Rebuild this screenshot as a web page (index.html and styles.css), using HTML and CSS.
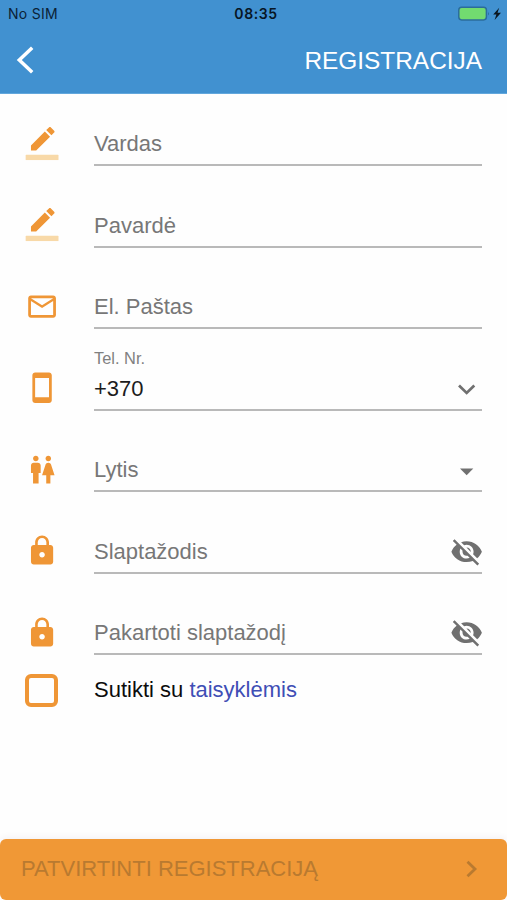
FILE: index.html
```html
<!DOCTYPE html>
<html lang="lt">
<head>
<meta charset="utf-8">
<meta name="viewport" content="width=device-width, initial-scale=1">
<title>Registracija</title>
<link rel="stylesheet" href="styles.css">
</head>
<body>
<svg width="0" height="0" class="defs">
  <symbol id="pencil" viewBox="0 0 24 24"><path d="M17.75 7L14 3.25l-10 10V17h3.75l10-10zm2.96-2.96c.39-.39.39-1.02 0-1.41L18.37.29c-.39-.39-1.02-.39-1.41 0L15 2.25 18.75 6l1.96-1.96z"/><rect y="20" width="24" height="4" rx=".6" fill="#f8d9a8"/></symbol>
  <symbol id="mail" viewBox="0 0 24 24"><path d="M20 4H4c-1.1 0-1.99.9-1.99 2L2 18c0 1.1.9 2 2 2h16c1.1 0 2-.9 2-2V6c0-1.1-.9-2-2-2zm0 14H4V8l8 5 8-5v10zm-8-7L4 6h16l-8 5z"/></symbol>
  <symbol id="phone" viewBox="0 0 24 24"><path d="M17 1.01L7 1c-1.1 0-1.99.9-1.99 2v18c0 1.1.89 2 1.99 2h10c1.1 0 2-.9 2-2V3c0-1.1-.9-1.99-2-1.99zM17 19H7V5h10v14z"/></symbol>
  <symbol id="wc" viewBox="0 0 24 24"><path d="M5.5 22v-7.5H4V9c0-1.1.9-2 2-2h3c1.1 0 2 .9 2 2v5.5H9.500V22h-4zM18 22v-6h3l-2.540-7.630C18.180 7.550 17.420 7 16.560 7h-.12c-.86 0-1.630.55-1.900 1.370L12 16h3v6h3zM7.500 6c1.110 0 2-.89 2-2s-.89-2-2-2-2 .89-2 2 .89 2 2 2zm9 0c1.110 0 2-.89 2-2s-.89-2-2-2-2 .89-2 2 .89 2 2 2z"/></symbol>
  <symbol id="lock" viewBox="0 0 24 24"><path d="M18 8h-1V6c0-2.760-2.240-5-5-5S7 3.240 7 6v2H6c-1.100 0-2 .9-2 2v10c0 1.100.9 2 2 2h12c1.100 0 2-.9 2-2V10c0-1.100-.9-2-2-2zm-6 9c-1.100 0-2-.9-2-2s.9-2 2-2 2 .9 2 2-.9 2-2 2zm3.100-9H8.900V6c0-1.710 1.390-3.100 3.100-3.100s3.100 1.390 3.100 3.100v2z"/></symbol>
  <symbol id="hidden" viewBox="0 0 24 24"><path d="M12 7c2.760 0 5 2.240 5 5 0 .65-.13 1.260-.36 1.830l2.920 2.920c1.510-1.260 2.700-2.890 3.430-4.750-1.730-4.390-6-7.500-11-7.500-1.400 0-2.740.25-3.980.7l2.160 2.160C10.740 7.130 11.350 7 12 7zM2 4.270l2.280 2.280.46.46C3.080 8.300 1.780 10.020 1 12c1.730 4.390 6 7.500 11 7.500 1.550 0 3.030-.3 4.380-.84l.42.42L19.730 22 21 20.730 3.270 3 2 4.270zM7.530 9.800l1.550 1.550c-.05.21-.08.43-.08.65 0 1.660 1.340 3 3 3 .22 0 .44-.03.65-.08l1.550 1.550c-.67.33-1.410.53-2.200.53-2.760 0-5-2.240-5-5 0-.79.2-1.530.53-2.200zm4.310-.78l3.150 3.150.02-.16c0-1.660-1.340-3-3-3l-.17.01z"/></symbol>
</svg>
<div class="screen">
  <header class="header">
    <div class="status">
      <span class="carrier">No SIM</span>
      <span class="clock">08:35</span>
      <svg class="battery" viewBox="0 0 44 16">
        <rect x=".8" y="1.300" width="27.600" height="12.600" rx="2.800" fill="#72db70" stroke="#2b6c9b" stroke-width="1.500"/>
        <path d="M30 5.500q1.700 2 0 4z" fill="#2b6c9b"/>
        <path d="M41.200 1.800L35.200 8.600h3.200l-1.800 5.300 6.400-7.200h-3.500z" fill="#0b1620"/>
      </svg>
    </div>
    <div class="titlebar">
      <svg class="back" viewBox="0 0 20 30"><path d="M16.200 2.800L3.300 15l12.900 12.200" fill="none" stroke="#fff" stroke-width="3.500"/></svg>
      <h1 class="title">REGISTRACIJA</h1>
    </div>
  </header>
  <main class="form">
    <div class="row"><svg class="icon" viewBox="-.3 0 24 24"><use href="#pencil" width="24" height="24"/></svg><div class="field"><span class="label">Vardas</span></div></div>
    <div class="row"><svg class="icon" viewBox="-.3 0 24 24"><use href="#pencil" width="24" height="24"/></svg><div class="field"><span class="label">Pavardė</span></div></div>
    <div class="row"><svg class="icon" viewBox="-.3 0 24 24"><use href="#mail" width="24" height="24"/></svg><div class="field"><span class="label">El. Paštas</span></div></div>
    <div class="row"><svg class="icon" viewBox="-.3 0 24 24"><use href="#phone" width="24" height="24"/></svg><div class="field"><span class="caption">Tel. Nr.</span><span class="label value">+370</span><svg class="tail" viewBox="0 0 34 34"><path d="M9.200 13.800l7.800 7.600 7.800-7.600" fill="none" stroke="#707070" stroke-width="2.800"/></svg></div></div>
    <div class="row"><svg class="icon" viewBox="-.3 0 24 24"><use href="#wc" width="24" height="24"/></svg><div class="field"><span class="label">Lytis</span><svg class="tail" viewBox="0 0 34 34"><path d="M10.200 15.700h13.600L17 22.600z"/></svg></div></div>
    <div class="row"><svg class="icon" viewBox="-.3 0 24 24"><use href="#lock" width="24" height="24"/></svg><div class="field"><span class="label">Slaptažodis</span><svg class="tail"><use href="#hidden"/></svg></div></div>
    <div class="row"><svg class="icon" viewBox="-.3 0 24 24"><use href="#lock" width="24" height="24"/></svg><div class="field"><span class="label">Pakartoti slaptažodį</span><svg class="tail"><use href="#hidden"/></svg></div></div>
    <div class="agree"><span class="checkbox"></span><span class="terms">Sutikti su <a class="link">taisyklėmis</a></span></div>
  </main>
  <div class="submit"><span class="submit-text">PATVIRTINTI REGISTRACIJĄ</span><svg class="next" viewBox="0 0 12 18"><path d="M1.500 1.800L9 9l-7.500 7.200" fill="none" stroke="#b97a30" stroke-width="2.800"/></svg></div>
</div>
</body>
</html>
```
FILE: styles.css
```css
* { box-sizing: border-box; }
body {
  margin: 0;
  background: #fefefe;
  font-family: "Liberation Sans", Arial, sans-serif;
  font-size: 22px;
  color: #111;
}
.defs { position: absolute; }
.screen {
  height: 900px;
  display: flex;
  flex-direction: column;
  overflow: hidden;
}
.header {
  height: 94px;
  flex: none;
  background: #4191d0;
  border-bottom: 1px solid #62a7dc;
}
.status {
  display: grid;
  grid-template-columns: 1fr auto 1fr;
  align-items: center;
  height: 27px;
  padding: 0 5px 0 8px;
  font-family: Inter, sans-serif;
  font-size: 14px;
  line-height: 27px;
  color: #0b2236;
}
.carrier { letter-spacing: .3px; }
.clock { padding-left: 2px; font-weight: 600; color: #071625; letter-spacing: .6px; }
.battery { width: 44px; height: 16px; justify-self: end; }
.titlebar {
  display: flex;
  align-items: center;
  justify-content: space-between;
  height: 66px;
  padding: 0 25px 0 15.500px;
}
.back { width: 20px; height: 30px; margin-top: -1px; }
.title { margin: 0; padding-top: 2px; font-size: 24.4px; font-weight: 400; color: #fff; line-height: 66px; }
.form {
  flex: 1;
  display: flex;
  flex-direction: column;
  gap: 36.500px;
  padding: 27px 24.600px 0 25px;
}
.row { display: flex; align-items: center; height: 45px; flex: none; }
.icon {
  width: 33.300px;
  height: 33.300px;
  fill: #ef9636;
  flex: none;
  margin-right: 35.700px;
  overflow: visible;
}
.field {
  position: relative;
  flex: 1;
  display: flex;
  align-items: center;
  justify-content: space-between;
  height: 45px;
  border-bottom: 2px solid #b9b9b9;
}
.label { padding-top: 3px; color: #777; line-height: 42px; }
.value { color: #1c1c1c; }
.caption {
  position: absolute;
  left: 0;
  top: -18px;
  font-size: 16.400px;
  line-height: 20px;
  color: #808080;
}
.tail { width: 33.300px; height: 33.300px; margin: 3px -.7px 0 0; fill: #707070; }
.agree { display: flex; align-items: center; height: 33px; margin-top: -17.500px; }
.checkbox {
  width: 33px;
  height: 33px;
  margin-right: 36px;
  border: 4px solid #ef9636;
  border-radius: 6px;
}
.terms { color: #0c0c0c; line-height: 32px; padding-bottom: 2px; }
.link { color: #3f4eb5; }
.submit {
  flex: none;
  display: flex;
  align-items: center;
  justify-content: space-between;
  height: 61px;
  padding: 0 29px 1px 21px;
  border-radius: 6px;
  background: #f09836;
  box-shadow: 0 -2px 6px rgba(80, 50, 100, .06);
  color: #b97a30;
}
.next { width: 12px; height: 18px; }
```
